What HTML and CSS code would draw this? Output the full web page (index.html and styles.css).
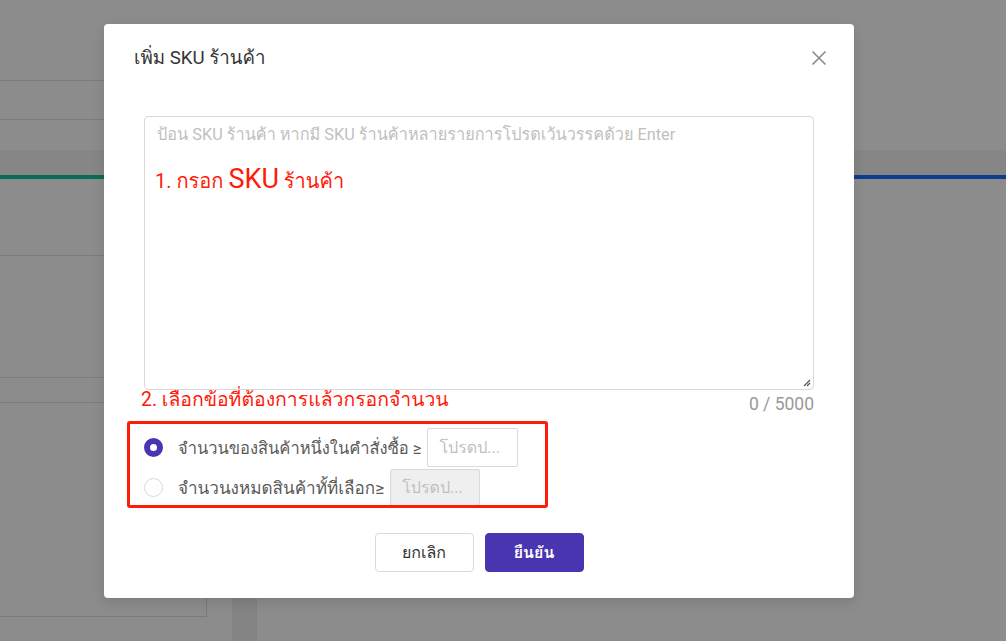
FILE: index.html
```html
<!DOCTYPE html>
<html lang="th">
<head>
<meta charset="utf-8">
<link rel="stylesheet" href="styles.css">
</head>
<body>
<div class="page">
  <div class="top">
    <div class="row-line l1"></div>
    <div class="row-line l2"></div>
  </div>
  <div class="band"></div>
  <div class="accent"><div class="green"></div><div class="blue"></div></div>
  <div class="lower">
    <div class="left-col">
      <div class="lline s1"></div>
      <div class="lline s2"></div>
      <div class="lline s3"></div>
      <div class="box"></div>
    </div>
    <div class="col-shade"></div>
  </div>
</div>

<div class="dialog">
  <div class="header">
    <div class="title">เพิ่ม SKU ร้านค้า</div>
    <svg class="close" width="16" height="16" viewBox="0 0 16 16"><path d="M1.5 1.5 L14.5 14.5 M14.5 1.5 L1.5 14.5" stroke="#8a8a8a" stroke-width="1.6" fill="none"/></svg>
  </div>
  <div class="body">
    <div class="textarea">
      <div class="placeholder">ป้อน SKU ร้านค้า หากมี SKU ร้านค้าหลายรายการโปรดเว้นวรรคด้วย Enter</div>
      <svg class="grip" width="10" height="10" viewBox="0 0 10 10"><path d="M9 3 L3 9 M9 6 L6 9" stroke="#555" stroke-width="1.2"/></svg>
    </div>
    <div class="counter">0 / 5000</div>
    <div class="options">
      <div class="opt">
        <span class="radio checked"></span>
        <span class="opt-text t1">จำนวนของสินค้าหนึ่งในคำสั่งซื้อ ≥</span>
        <span class="num-input i1">โปรดป...</span>
      </div>
      <div class="opt">
        <span class="radio"></span>
        <span class="opt-text t2">จำนวนงหมดสินค้าทั้ที่เลือก≥</span>
        <span class="num-input i2">โปรดป...</span>
      </div>
    </div>
  </div>
  <div class="footer">
    <button class="btn cancel">ยกเลิก</button>
    <button class="btn ok">ยืนยัน</button>
  </div>
  <div class="note n1">1. กรอก <span class="big">SKU</span> ร้านค้า</div>
  <div class="note n2">2. เลือกข้อที่ต้องการแล้วกรอกจำนวน</div>
  <div class="redbox"></div>
</div>
</body>
</html>
```

FILE: styles.css
```css
* { box-sizing: border-box; }
html, body { margin: 0; padding: 0; }
body {
  width: 1006px;
  height: 641px;
  overflow: hidden;
  background: #8c8c8c;
  font-family: Roboto, Loma, "Noto Sans Thai Looped", sans-serif;
  position: relative;
}
.page { width: 1006px; height: 641px; }
.top { height: 150px; padding-top: 80px; }
.row-line { width: 300px; height: 1px; background: #7c7c7c; }
.l1 { margin-bottom: 38px; }
.band { height: 25px; background: #868686; }
.accent { display: flex; height: 4px; }
.green { width: 500px; background: #0b6a55; }
.blue { flex: 1; background: #0e3d8c; }
.lower { display: flex; height: 462px; }
.left-col { width: 207px; padding-top: 76px; }
.lline { height: 1px; background: #7c7c7c; width: 207px; }
.s1 { margin-bottom: 121px; }
.s2 { margin-bottom: 24px; }
.box { height: 214px; border-right: 1px solid #7a7a7a; border-bottom: 1px solid #7a7a7a; }
.col-shade { width: 25px; margin-left: 25px; background: #848484; }

.dialog {
  position: absolute;
  left: 104px;
  top: 24px;
  width: 750px;
  height: 574px;
  background: #fff;
  border-radius: 4px;
  box-shadow: 0 4px 12px rgba(0,0,0,0.12);
  display: flex;
  flex-direction: column;
}
.header {
  height: 66px;
  padding: 0 27px 0 30px;
  display: flex;
  align-items: center;
  justify-content: space-between;
}
.title { font-size: 18.7px; color: #333; }
.close { margin-top: 2px; }
.body { padding: 26px 40px 0 40px; }
.textarea {
  height: 274px;
  border: 1px solid #d9d9d9;
  border-radius: 4px;
  padding: 7px 12px;
  position: relative;
}
.placeholder { color: #bfbfbf; font-size: 16.3px; line-height: 22px; }
.grip { position: absolute; right: 2px; bottom: 2px; }
.counter { text-align: right; color: #999; font-size: 17.5px; line-height: 20px; margin-top: 4px; }
.options { margin-top: 14px; display: flex; flex-direction: column; gap: 2px; }
.opt { display: flex; align-items: center; height: 39px; }
.opt + .opt { height: 37px; }
.radio {
  width: 19px; height: 19px; border-radius: 50%;
  border: 1px solid #d9d9d9; margin-left: 0; margin-right: 15px; flex: none; background: #fff;
}
.radio.checked { border: 6.5px solid #4a35b0; background: #fff; }
.opt-text { color: #595959; }
.t1 { font-size: 16.5px; }
.t2 { font-size: 17.1px; }
.num-input {
  margin-left: 6px;
  border: 1px solid #d9d9d9;
  border-radius: 2px;
  color: #bfbfbf;
  font-size: 16px;
  display: flex; align-items: center;
  padding-left: 11px;
}
.i1 { width: 91px; height: 39px; }
.i2 { width: 90px; height: 37px; background: #efefef; }
.footer { margin-top: 27px; display: flex; justify-content: center; gap: 11px; }
.btn {
  width: 99px; height: 39px; border-radius: 4px; font-size: 16px;
  font-family: inherit; cursor: pointer;
}
.cancel { background: #fff; border: 1px solid #d9d9d9; color: #333; }
.ok { background: #4a35b0; border: 1px solid #4a35b0; color: #fff; font-weight: bold; }
.note { position: absolute; color: #ff1a0a; font-size: 20px; line-height: 24px; white-space: nowrap; }
.n1 { left: 51px; top: 143px; }
.n1 .big { font-size: 27px; }
.n2 { left: 37px; top: 364px; font-size: 19.4px; }
.redbox {
  position: absolute; left: 23px; top: 397px; width: 421px; height: 87px;
  border: 3px solid #ff1a0a; border-radius: 3px;
}
```
